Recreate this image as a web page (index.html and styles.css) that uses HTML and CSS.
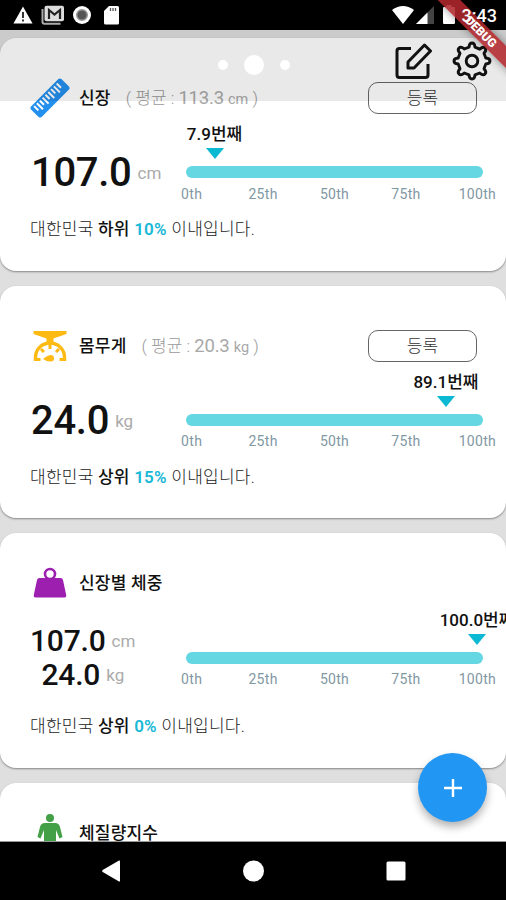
FILE: index.html
```html
<!DOCTYPE html>
<html lang="ko">
<head>
<meta charset="utf-8">
<meta name="viewport" content="width=device-width, initial-scale=1">
<title>성장 기록</title>
<link rel="stylesheet" href="styles.css">
</head>
<body>
<div class="screen">
  <header class="status">
    <div class="status-icons">
      <svg width="20" height="18" viewBox="0 0 20 18"><path fill="#fff" d="M10 0.500 19.500 17.500H.5z"/><path stroke="#222" stroke-width="1.800" d="M10 6v6M10 13.500v2"/></svg>
      <svg width="24" height="20" viewBox="0 0 24 20"><path d="M1.500 4v13q0 1.800 2 1.800h16" fill="none" stroke="#aaa" stroke-width="2"/><rect x="3.500" y=".7" width="19.500" height="15.500" rx="2" fill="#ddd"/><path d="M8 14V5l5.500 4.500L19 5v9" fill="none" stroke="#222" stroke-width="2.200"/></svg>
      <svg width="18" height="20" viewBox="0 0 18 20"><circle cx="9" cy="10" r="9" fill="#fff"/><circle cx="9" cy="10" r="5.300" fill="#555" stroke="#999" stroke-width="1.500"/></svg>
      <svg width="15" height="20" viewBox="0 0 15 20"><path d="M5 1h8.500Q15 1 15 2.500v15.500Q15 19.500 13.500 19.500h-12Q0 19.500 0 18V6z" fill="#fff"/><path d="M6.500 3v3M9 3v3M11.500 3v3" stroke="#555" stroke-width="1.300"/></svg>
    </div>
    <div class="status-icons status-right">
      <svg width="22" height="18" viewBox="0 0 22 18"><path fill="#fff" d="M0 4Q11-4 22 4L11 18z"/></svg>
      <svg width="18" height="18" viewBox="0 0 18 18"><path fill="#444" d="M18 0v18H0z"/><path fill="#fff" d="M11.500 6.500V18H0z"/></svg>
      <svg width="12" height="19" viewBox="0 0 12 19"><path fill="#fff" d="M3.500 0h5v2H11q1 0 1 1v15q0 1-1 1H1q-1 0-1-1V3q0-1 1-1h2.500z"/></svg>
      <span class="time">3:43</span>
    </div>
  </header>

  <main class="body">
    <div class="appbar">
      <div class="dots"><i></i><i class="on"></i><i></i></div>
      <div class="actions">
        <svg width="38" height="38" viewBox="0 0 38 38" fill="none" stroke="#111" stroke-width="3" stroke-linejoin="round"><path d="M17 6.500H5.500Q3 6.500 3 9v24Q3 35.500 5.500 35.500h26q2.500 0 2.500-2.500V22"/><path d="M14 20 30.500 3l6 6L20 26h-6z"/></svg>
        <svg width="40" height="40" viewBox="0 0 40 40" fill="none" stroke="#111" stroke-width="2.900" stroke-linejoin="round"><circle cx="20" cy="20" r="5.800"/><path d="M17 6.200Q17.200 2 20 2t3 4.200L27.700 8.200Q31 5 33 7t-1 5.200L33.800 17Q38 17.200 38 20t-4.200 3L32 27.700Q35 31 33 33t-5.300-1L23 33.800Q22.800 38 20 38t-3-4.200L12.300 32Q9 35 7 33t1-5.300L6.200 23Q2 22.800 2 20t4.200-3L8 12.300Q5 9 7 7t5.300 1z"/></svg>
      </div>
    </div>

    <div class="cards">
      <section class="card">
        <div class="head">
          <svg class="icon" width="40" height="40" viewBox="0 0 40 40"><g transform="rotate(-45 20 20)"><rect x="-1.500" y="12.500" width="43" height="15" rx="2.500" fill="#2490ee"/><path d="M3 14.500v6M7 14.500v8.500M11 14.500v6M15 14.500v8.500M19 14.500v6M23 14.500v8.500M27 14.500v6M31 14.500v8.500M35 14.500v6" stroke="#fff" stroke-width="2"/></g></svg>
          <h2>신장</h2><span class="avg">( 평균 : <b>113.3</b> <small>cm</small> )</span>
          <button class="register">등록</button>
        </div>
        <div class="metrics">
          <div class="value"><b>107.0</b><span>cm</span></div>
          <div class="gauge">
            <div class="track"><div class="pin" style="left:7.9%"><span>7.9번째</span></div></div>
            <div class="ticks"><span>0th</span><span>25th</span><span>50th</span><span>75th</span><span>100th</span></div>
          </div>
        </div>
        <p class="rank">대한민국 <b>하위</b> <em>10%</em> 이내입니다.</p>
      </section>

      <section class="card">
        <div class="head">
          <svg class="icon" width="40" height="40" viewBox="0 0 40 40"><path fill="#fdba12" d="M3.500 5h33v3l-13 4.500v4h-7v-4L3.500 8z"/><path d="M5.500 35V31a14.500 14 0 0 1 29 0v4" fill="none" stroke="#fdba12" stroke-width="3.400"/><path d="M4 33.500h6.500M29.500 33.500H36M11 23l3 3M20 18v5M29 23l-3 3" stroke="#fdba12" stroke-width="3"/><path d="M13 33q5-4 8-4 3 0 3 3.500T20 35.500q-3 0-7-2.500" fill="#fdba12"/></svg>
          <h2>몸무게</h2><span class="avg">( 평균 : <b>20.3</b> <small>kg</small> )</span>
          <button class="register">등록</button>
        </div>
        <div class="metrics">
          <div class="value"><b>24.0</b><span>kg</span></div>
          <div class="gauge">
            <div class="track"><div class="pin" style="left:89.1%"><span>89.1번째</span></div></div>
            <div class="ticks"><span>0th</span><span>25th</span><span>50th</span><span>75th</span><span>100th</span></div>
          </div>
        </div>
        <p class="rank">대한민국 <b>상위</b> <em>15%</em> 이내입니다.</p>
      </section>

      <section class="card double">
        <div class="head">
          <svg class="icon" width="40" height="40" viewBox="0 0 40 40"><circle cx="20" cy="11" r="5" fill="none" stroke="#9c1fb0" stroke-width="2.600"/><path fill="#9c1fb0" d="M9.500 15h21q2 0 2.500 2l3.200 15q.4 2.500-2 2.500H5.800q-2.400 0-2-2.500L7 17q.5-2 2.500-2"/></svg>
          <h2>신장별 체중</h2>
        </div>
        <div class="metrics">
          <div class="pair">
            <div class="value"><b>107.0</b><span>cm</span></div>
            <div class="value"><b>24.0</b><span>kg</span></div>
          </div>
          <div class="gauge">
            <div class="track"><div class="pin" style="left:100%"><span>100.0번째</span></div></div>
            <div class="ticks"><span>0th</span><span>25th</span><span>50th</span><span>75th</span><span>100th</span></div>
          </div>
        </div>
        <p class="rank">대한민국 <b>상위</b> <em>0%</em> 이내입니다.</p>
      </section>

      <section class="card double">
        <div class="head">
          <svg class="icon" width="40" height="40" viewBox="0 0 40 40"><circle cx="20" cy="5" r="4" fill="#43a047"/><path fill="#43a047" d="M15 10h10q4 0 5 4l2.500 10-3 1.500L26 17v22H14V17l-3.500 8.500-3-1.500L10 14q1-4 5-4"/></svg>
          <h2>체질량지수</h2>
        </div>
      </section>
    </div>

    <button class="fab" aria-label="추가"><svg width="20" height="20" viewBox="0 0 20 20"><path d="M10 1v18M1 10h18" stroke="#fff" stroke-width="2.400"/></svg></button>
  </main>

  <nav class="nav">
    <svg width="18" height="22" viewBox="0 0 18 22"><path fill="#fff" d="M17 .5q1-.5 1 1v19q0 1.500-1 1L.7 12q-1-1 0-2z"/></svg>
    <svg width="22" height="22" viewBox="0 0 22 22"><circle cx="11.500" cy="11" r="10.500" fill="#fff"/></svg>
    <svg width="20" height="20" viewBox="0 0 20 20"><rect x=".5" y=".5" width="19" height="19" rx="1.500" fill="#fff"/></svg>
  </nav>
  <div class="banner">DEBUG</div>
</div>
</body>
</html>
```

FILE: styles.css
```css
* { box-sizing: border-box; }
body { margin: 0; font-family: Roboto, "Noto Sans CJK KR", sans-serif; color: #111; }
h2, p { margin: 0; }
button { font: inherit; padding: 0; }
svg { display: block; flex: none; }

.screen { position: relative; width: 506px; height: 900px; display: flex; flex-direction: column; overflow: hidden; background: #000; }

.status { height: 29.5px; flex: none; display: flex; justify-content: space-between; padding: 0 9px 0 13px; }
.status-icons { display: flex; align-items: center; gap: 9px; }
.status-icons svg:nth-child(4) { margin-left: 4px; }
.status-icons svg:nth-child(3) { margin-left: -1px; }
.status-icons svg:nth-child(2) { margin-left: -1px; }
.status-right { gap: 0; }
.status-right svg:nth-child(2) { margin-left: 2px; }
.status-right svg:nth-child(3) { margin-left: 9px; }
.time { position: relative; z-index: 5; color: #fff; font-size: 18px; font-weight: 500; line-height: 30px; margin-left: 7px; padding-top: 2px; }

.body { position: relative; height: 812.5px; flex: none; overflow: hidden; background: #dfdfdf; border-bottom: 1px solid #999; }
.appbar { position: absolute; z-index: 2; top: 0; left: 0; right: 0; height: 71.5px; background: rgba(0, 0, 0, .085); display: grid; align-items: center; }
.dots, .actions { grid-area: 1 / 1; display: flex; align-items: center; }
.dots { justify-content: center; gap: 16px; padding-left: 1px; }
.dots i { width: 10px; height: 10px; border-radius: 50%; background: #fff; }
.dots .on { width: 20px; height: 20px; }
.actions { justify-content: flex-end; gap: 20px; padding: 0 14px 9px 0; }

.cards { display: flex; flex-direction: column; gap: 15px; padding-top: 8.5px; }
.card { height: 232.5px; padding: 44px 23px 0 30px; border-radius: 16px; background: #fff; box-shadow: 0 1px 2px rgba(0, 0, 0, .4); }
.head { height: 32px; display: flex; align-items: center; }
.icon { margin-right: 9px; }
h2 { font-size: 17px; line-height: 24px; font-weight: 500; letter-spacing: .2px; }
.avg { margin: 2px 0 0 15px; font-size: 17px; line-height: 24px; color: #999; font-weight: 300; white-space: nowrap; }
.avg b { font-size: 18.5px; font-weight: 400; letter-spacing: -.2px; color: #a8a8a8; }
.avg small { font-size: 14.5px; font-weight: 400; color: #a8a8a8; }
.register { width: 109px; height: 32px; margin: 0 6px 0 auto; border: 1px solid #666; border-radius: 10px; background: transparent; font-size: 17px; line-height: 28px; font-weight: 300; color: #333; }

.metrics { display: flex; height: 96.5px; }
.value { width: 156px; display: flex; align-items: center; }
.metrics > .value { height: 60px; margin-top: 29px; }
.value b { font-size: 40px; line-height: 48px; font-weight: 500; letter-spacing: -.3px; }
.metrics > .value b { margin-left: 1px; }
.value span { margin-left: 6px; font-size: 17px; color: #aaa; font-weight: 400; }
.gauge { width: 297px; padding-top: 52px; }
.track { height: 12px; border: 0 solid transparent; border-width: 0 6px; border-radius: 6px; background: #64d7e3; position: relative; }
.pin { position: absolute; top: -18px; width: 0; height: 0; border: 10px solid transparent; border-width: 11px 9.5px 0; border-top-color: #0cb9d3; transform: translateX(-50%); }
.pin span { position: absolute; left: 0; bottom: 16px; transform: translateX(-50%); font-size: 17px; line-height: 18px; font-weight: 500; white-space: nowrap; }
.ticks { display: flex; justify-content: space-between; margin: 7.500px -30px 0; }
.ticks span { width: 71.3px; text-align: center; font-size: 14px; line-height: 16px; letter-spacing: .3px; color: #8198a3; }
.rank { font-size: 17px; line-height: 24px; margin-top: 6.500px; font-weight: 300; color: #222; white-space: pre; letter-spacing: .25px; }
.rank b { font-weight: 500; color: #111; }
.rank em { font-style: normal; font-weight: 600; color: #18b8d6; }

.double { height: 234.5px; padding-top: 34px; }
.double .gauge { padding-top: 52.500px; }
.double .metrics { height: 115px; }
.double .rank { margin-top: 0; }
.pair { width: 156px; padding-top: 25px; }
.pair .value { height: 34px; }
.pair .value b { font-size: 30px; line-height: 34px; letter-spacing: -.2px; }
.pair .value + .value { padding-left: 11.5px; }

.fab { position: absolute; z-index: 3; right: 19px; bottom: 19px; width: 69px; height: 69px; border: 0; border-radius: 50%; background: #2196f3; display: grid; place-items: center; box-shadow: 0 5px 8px rgba(0, 0, 0, .3); }

.nav { flex: 1; display: flex; align-items: center; justify-content: space-between; padding: 0 100px 0 102px; }

.banner { position: absolute; z-index: 4; left: 421px; top: 24px; width: 120px; height: 16px; background: rgba(176, 40, 46, .88); transform: rotate(45deg); color: #fff; font-size: 12px; line-height: 16px; font-weight: 900; text-align: center; box-shadow: 0 0 8px rgba(0, 0, 0, .4); }
```
